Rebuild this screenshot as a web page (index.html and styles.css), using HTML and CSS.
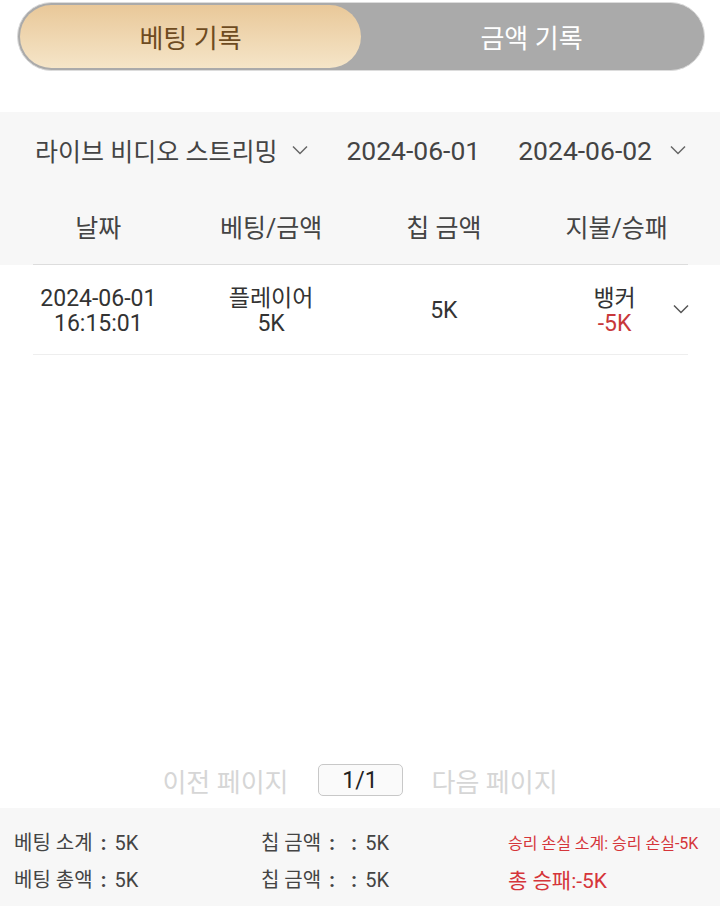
FILE: index.html
```html
<!DOCTYPE html>
<html lang="ko">
<head>
<meta charset="utf-8">
<link rel="stylesheet" href="styles.css">
</head>
<body>
<div class="page">
  <div class="tabs">
    <div class="tab active">베팅 기록</div>
    <div class="tab">금액 기록</div>
  </div>

  <div class="band">
    <div class="filters">
      <div class="sel">라이브 비디오 스트리밍
        <svg class="chev" viewBox="0 0 16 10" width="16" height="10"><path d="M1 1.5 L8 8.5 L15 1.5" fill="none" stroke="#666" stroke-width="1.5"/></svg>
      </div>
      <div class="sel num">2024-06-01</div>
      <div class="sel num">2024-06-02
        <svg class="chev chev-wide" viewBox="0 0 16 10" width="16" height="10"><path d="M1 1.5 L8 8.5 L15 1.5" fill="none" stroke="#666" stroke-width="1.5"/></svg>
      </div>
    </div>
    <div class="table">
      <div class="row head">
        <div class="cell">날짜</div>
        <div class="cell">베팅/금액</div>
        <div class="cell">칩 금액</div>
        <div class="cell">지불/승패</div>
      </div>
    </div>
  </div>

  <div class="table body">
    <div class="row data">
      <div class="cell">2024-06-01<br>16:15:01</div>
      <div class="cell">플레이어<br>5K</div>
      <div class="cell">5K</div>
      <div class="cell">뱅커<br><span class="neg">-5K</span></div>
      <svg class="row-chev" viewBox="0 0 16 10" width="16" height="10"><path d="M1 1.5 L8 8.5 L15 1.5" fill="none" stroke="#555" stroke-width="1.5"/></svg>
    </div>
  </div>

  <div class="pager">
    <span class="pg-btn">이전 페이지</span>
    <span class="pg-num">1/1</span>
    <span class="pg-btn">다음 페이지</span>
  </div>

  <div class="summary">
    <div class="sum-row">
      <div class="sum-col">베팅 소계<span class="colon">:</span>5K</div>
      <div class="sum-col">칩 금액<span class="colon">:</span><span class="colon">:</span>5K</div>
      <div class="sum-col red small">승리 손실 소계: 승리 손실-5K</div>
    </div>
    <div class="sum-row">
      <div class="sum-col">베팅 총액<span class="colon">:</span>5K</div>
      <div class="sum-col">칩 금액<span class="colon">:</span><span class="colon">:</span>5K</div>
      <div class="sum-col red">총 승패:-5K</div>
    </div>
  </div>
</div>
</body>
</html>
```

FILE: styles.css
```css
html, body {
  margin: 0;
  padding: 0;
  background: #fff;
}
body {
  font-family: Roboto, "Noto Sans CJK KR", sans-serif;
  color: #333;
}
.page {
  height: 906px;
  display: flex;
  flex-direction: column;
}

/* tabs */
.tabs {
  margin: 2px 15px 0 17px;
  height: 69px;
  box-sizing: border-box;
  border: 1px solid #dcdcdc;
  background: #aaaaaa;
  border-radius: 35px;
  padding: 2px;
  display: flex;
}
.tab {
  flex: 1;
  display: flex;
  align-items: center;
  justify-content: center;
  font-size: 26px;
  color: #fff;
  padding-bottom: 1px;
}
.tab.active {
  flex: 0 0 341px;
  border-radius: 32px;
  background: linear-gradient(#e9c899, #f5e5c8);
  color: #6e4b1f;
}

/* filter band */
.band {
  margin-top: 41px;
  background: #f7f7f7;
}
.filters {
  height: 76px;
  display: flex;
  align-items: center;
  justify-content: space-between;
  padding: 0 34px 0 35px;
  font-size: 25px;
  color: #444;
}
.sel {
  display: flex;
  align-items: center;
}
.sel.num {
  font-size: 26.5px;
}
.chev {
  margin-left: 15px;
}
.chev-wide {
  margin-left: 18px;
}

.table {
  margin: 0 32px 0 33px;
}
.row {
  display: grid;
  grid-template-columns: repeat(4, 1fr);
  margin: 0 -15px 0 -21px;
  align-items: center;
  text-align: center;
}
.table:not(.body) {
  border-bottom: 1px solid #dddddd;
}
.row.head {
  height: 76px;
  font-size: 25px;
  color: #444;
}
.table.body {
  border-bottom: 1px solid #eeeeee;
}
.row.data {
  position: relative;
  height: 89px;
  font-size: 23px;
  line-height: 25px;
  color: #333;
  padding-top: 2px;
  box-sizing: border-box;
}
.neg {
  color: #c8383a;
}
.row.data .cell:nth-child(4) {
  padding-right: 4px;
}
.row-chev {
  position: absolute;
  right: 14px;
  top: 39px;
}

/* pager */
.pager {
  margin-top: auto;
  height: 56px;
  display: flex;
  align-items: center;
  justify-content: center;
  gap: 29px;
  font-size: 26px;
}
.pg-btn {
  color: #d6d6d6;
}
.pg-num {
  width: 85px;
  height: 32px;
  box-sizing: border-box;
  border: 1px solid #c8c8c8;
  border-radius: 5px;
  background: #fafafa;
  display: flex;
  align-items: center;
  justify-content: center;
  font-size: 23px;
  color: #222;
}

/* summary */
.summary {
  height: 98px;
  background: #f7f7f7;
  padding: 15px 0 0 14px;
  box-sizing: border-box;
}
.sum-row {
  display: grid;
  grid-template-columns: 247px 247px 1fr;
  height: 37px;
  align-items: center;
  font-size: 20px;
  color: #444;
}
.colon {
  display: inline-block;
  width: 22px;
  text-align: center;
  font-weight: bold;
}
.red {
  color: #d5353a;
  font-size: 21px;
}
.red.small {
  font-size: 16px;
}
```
